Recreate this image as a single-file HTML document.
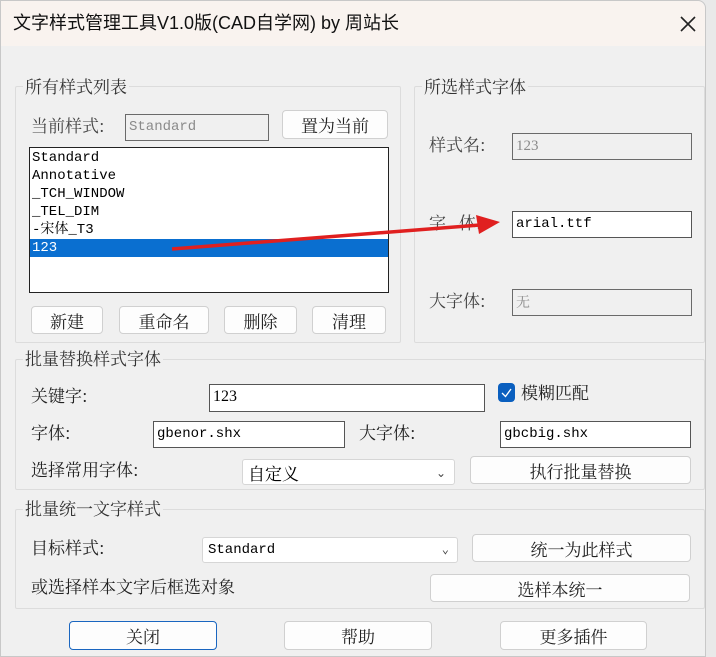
<!DOCTYPE html>
<html><head><meta charset="utf-8"><style>
*{box-sizing:border-box;margin:0;padding:0}
body{width:716px;height:657px;overflow:hidden;background:#e9e9e9;font-family:"Liberation Sans","Noto Sans CJK SC",sans-serif;position:relative}
.win{position:absolute;left:0;top:0;width:706px;height:657px;background:#f0f0f0;border:1px solid #c8c8c8;border-radius:0 8px 0 0}
.title{position:absolute;left:0;top:0;width:704px;height:45px;background:#f9f3ef;border-radius:0 8px 0 0}
.t{position:absolute;white-space:nowrap;font-family:"Noto Serif CJK SC","Liberation Serif",serif;font-size:17px;color:#222;line-height:1}
.grp{position:absolute;border:1px solid #dcdcdc;border-radius:2px}
.gl{position:absolute;background:#f0f0f0;padding:0 2px;font-family:"Noto Serif CJK SC",serif;font-size:17px;color:#333;line-height:1}
.in{position:absolute;background:#fff;border:1px solid #555;font-family:"Liberation Mono","Noto Serif CJK SC",monospace;font-size:14px;padding-left:3px;line-height:24px;color:#000}
.dis{background:#f0f0f0;border-color:#6a6a6a;color:#8a8a8a}
.btn{position:absolute;background:#fdfdfd;border:1px solid #d0d0d0;border-radius:4px;text-align:center;font-family:"Noto Serif CJK SC",serif;font-size:17px;color:#222;display:flex;align-items:center;justify-content:center}
.cb{position:absolute;background:#fff;border:1px solid #d6d6d6;border-radius:3px;font-family:"Noto Serif CJK SC","Liberation Mono",serif;font-size:17px;padding-left:5px;display:flex;align-items:center}
.cb span{position:absolute;right:8px;top:4px;font-size:12px;color:#444}
</style></head><body>
<div class="win">
<div class="title"></div>
<div class="t" style="left:12px;top:13px;font-family:'Liberation Sans','Noto Sans CJK SC',sans-serif;font-size:18px;color:#111">文字样式管理工具V1.0版(CAD自学网) by 周站长</div>
<svg style="position:absolute;left:678px;top:14px" width="18" height="18"><path d="M2 2L16 16M16 2L2 16" stroke="#222" stroke-width="1.6"/></svg>

<div class="grp" style="left:14px;top:85px;width:386px;height:257px"></div>
<div class="gl" style="left:22px;top:76px">所有样式列表</div>
<div class="t" style="left:30px;top:115px;color:#444">当前样式:</div>
<div class="in dis" style="left:124px;top:113px;width:144px;height:27px;line-height:24px">Standard</div>
<div class="btn" style="left:281px;top:109px;width:106px;height:29px">置为当前</div>
<div style="position:absolute;left:28px;top:146px;width:360px;height:146px;background:#fff;border:1px solid #222;font-family:'Liberation Mono','Noto Serif CJK SC',monospace;font-size:14px;line-height:18px;padding-top:1px">
<div style="padding-left:2px">Standard</div><div style="padding-left:2px">Annotative</div><div style="padding-left:2px">_TCH_WINDOW</div><div style="padding-left:2px">_TEL_DIM</div><div style="padding-left:2px">-宋体_T3</div><div style="padding-left:2px;background:#0a6fd0;color:#fff">123</div></div>
<div class="btn" style="left:30px;top:305px;width:72px;height:28px">新建</div>
<div class="btn" style="left:118px;top:305px;width:90px;height:28px">重命名</div>
<div class="btn" style="left:223px;top:305px;width:73px;height:28px">删除</div>
<div class="btn" style="left:311px;top:305px;width:74px;height:28px">清理</div>

<div class="grp" style="left:413px;top:85px;width:291px;height:257px"></div>
<div class="gl" style="left:421px;top:76px">所选样式字体</div>
<div class="t" style="left:428px;top:134px;color:#444">样式名:</div>
<div class="in dis" style="left:511px;top:132px;width:180px;height:27px;font-family:'Liberation Serif',serif;font-size:15px">123</div>
<div class="t" style="left:428px;top:212px;color:#444">字&nbsp;&nbsp;&nbsp;体:</div>
<div class="in" style="left:511px;top:210px;width:180px;height:27px">arial.ttf</div>
<div class="t" style="left:428px;top:290px;color:#444">大字体:</div>
<div class="in dis" style="left:511px;top:288px;width:180px;height:27px;font-family:'Noto Serif CJK SC',serif">无</div>

<div class="grp" style="left:14px;top:358px;width:690px;height:131px"></div>
<div class="gl" style="left:22px;top:348px">批量替换样式字体</div>
<div class="t" style="left:30px;top:385px">关键字:</div>
<div class="in" style="left:208px;top:383px;width:276px;height:28px;font-family:'Liberation Serif',serif;font-size:16px">123</div>
<div style="position:absolute;left:497px;top:382px;width:17px;height:19px;background:#0a5fbf;border-radius:4px"><svg width="17" height="19"><path d="M4 10L7.5 13.5L13 6" stroke="#fff" stroke-width="1.3" fill="none"/></svg></div>
<div class="t" style="left:520px;top:382px">模糊匹配</div>
<div class="t" style="left:30px;top:422px">字体:</div>
<div class="in" style="left:152px;top:420px;width:192px;height:27px">gbenor.shx</div>
<div class="t" style="left:358px;top:422px">大字体:</div>
<div class="in" style="left:499px;top:420px;width:191px;height:27px">gbcbig.shx</div>
<div class="t" style="left:30px;top:459px">选择常用字体:</div>
<div class="cb" style="left:241px;top:458px;width:213px;height:26px">自定义<span>&#8964;</span></div>
<div class="btn" style="left:469px;top:455px;width:221px;height:28px">执行批量替换</div>

<div class="grp" style="left:14px;top:508px;width:690px;height:100px"></div>
<div class="gl" style="left:22px;top:498px">批量统一文字样式</div>
<div class="t" style="left:30px;top:537px">目标样式:</div>
<div class="cb" style="left:201px;top:536px;width:256px;height:26px;font-family:'Liberation Mono',monospace;font-size:14px">Standard<span>&#8964;</span></div>
<div class="btn" style="left:471px;top:533px;width:219px;height:28px">统一为此样式</div>
<div class="t" style="left:30px;top:576px">或选择样本文字后框选对象</div>
<div class="btn" style="left:429px;top:573px;width:260px;height:28px">选样本统一</div>

<div class="btn" style="left:68px;top:620px;width:148px;height:29px;border:1px solid #1a66c0">关闭</div>
<div class="btn" style="left:283px;top:620px;width:148px;height:29px">帮助</div>
<div class="btn" style="left:499px;top:620px;width:147px;height:29px">更多插件</div>
</div>
<svg style="position:absolute;left:0;top:0" width="716" height="657"><path d="M172 249L480 225" stroke="#e02020" stroke-width="3.5"/><path d="M500 222L476 215L479 234Z" fill="#e02020"/></svg>
</body></html>
